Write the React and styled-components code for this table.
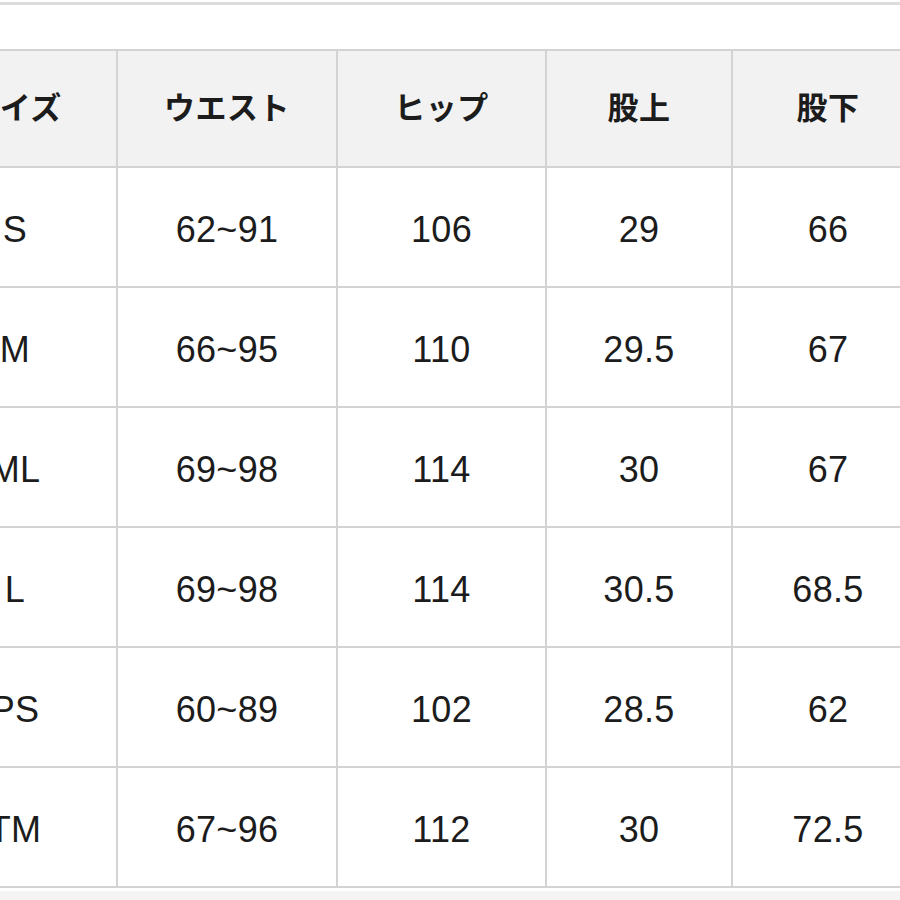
import React from "react";
import styled, { createGlobalStyle } from "styled-components";

const GlobalStyle = createGlobalStyle`
  html, body {
    margin: 0;
    padding: 0;
    background: #ffffff;
    overflow: hidden;
  }
`;

const Page = styled.div`
  width: 900px;
  height: 900px;
  overflow: hidden;
  background: #ffffff;
  display: flex;
  flex-direction: column;
`;

const TopRule = styled.div`
  margin-top: 2px;
  height: 3px;
  background: #dcdcdc;
  flex-shrink: 0;
`;

const Grid = styled.div`
  margin-top: 44px;
  margin-left: -88px;
  width: fit-content;
  display: grid;
  grid-template-columns: 202px 218px 207px 184px 190px;
  grid-template-rows: 115px repeat(6, 118px);
  gap: 2px;
  padding: 2px;
  background: #d3d3d3;
  flex-shrink: 0;
`;

const Cell = styled.div`
  background: ${(p) => (p.$head ? "#f2f2f2" : "#ffffff")};
  color: #1c1c1c;
  display: flex;
  align-items: center;
  justify-content: center;
  font-family: ${(p) =>
    p.$head
      ? '"Noto Sans CJK JP", "Noto Sans", sans-serif'
      : '"Liberation Sans", Arial, sans-serif'};
  font-size: ${(p) => (p.$head ? "31px" : "36px")};
  font-weight: ${(p) => (p.$head ? 700 : 400)};
  letter-spacing: ${(p) => (p.$head ? "0.5px" : "0.3px")};
  padding-top: ${(p) => (p.$head ? "0" : "6px")};
  padding-bottom: ${(p) => (p.$head ? "6px" : "0")};
  box-sizing: border-box;
`;

const FooterBand = styled.div`
  margin-top: 3px;
  flex: 1;
  background: #f4f4f4;
`;

const headers = ["サイズ", "ウエスト", "ヒップ", "股上", "股下"];

const rows = [
  ["S", "62~91", "106", "29", "66"],
  ["M", "66~95", "110", "29.5", "67"],
  ["ML", "69~98", "114", "30", "67"],
  ["L", "69~98", "114", "30.5", "68.5"],
  ["PS", "60~89", "102", "28.5", "62"],
  ["TM", "67~96", "112", "30", "72.5"],
];

export default function App() {
  return (
    <>
      <GlobalStyle />
      <Page>
        <TopRule />
        <Grid>
          {headers.map((h) => (
            <Cell key={h} $head>
              {h}
            </Cell>
          ))}
          {rows.map((row, i) =>
            row.map((v, j) => <Cell key={`${i}-${j}`}>{v}</Cell>)
          )}
        </Grid>
        <FooterBand />
      </Page>
    </>
  );
}
